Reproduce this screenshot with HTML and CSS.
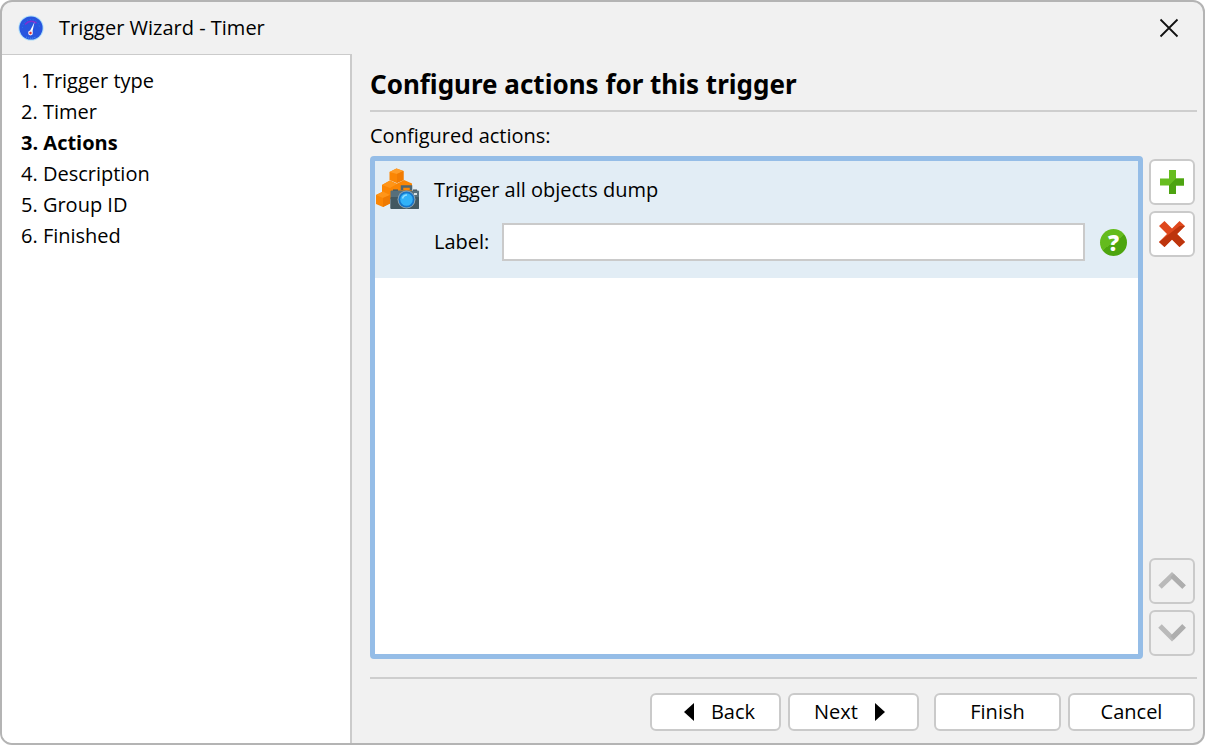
FILE: index.html
```
<!DOCTYPE html>
<html lang="en">
<head>
    <meta charset="UTF-8">
    <meta name="viewport" content="width=device-width, initial-scale=1.0">
    <title>Trigger Wizard - Timer</title>
    <link rel="stylesheet" href="styles.css">
</head>
<body>
    <div class="window">
        <header class="titlebar">
            <svg class="app-icon" viewBox="0 0 26 26" aria-hidden="true">
                <circle cx="13" cy="13" r="12.6" fill="#a9dcfa"/>
                <circle cx="13" cy="13" r="11.6" fill="#2855df"/>
                <path d="M4.500 13a8.500 8.500 0 0 1 17 0" fill="none" stroke="#2f78ef" stroke-width="1" stroke-dasharray="1 2"/>
                <path d="M7 9.500Q12 4 18.500 8" fill="none" stroke="#8030cf" stroke-width="1.500"/>
                <path d="M16.500 7l-5.300 10.500 2.800 1z" fill="#fff"/>
                <circle cx="12.500" cy="18" r="2.400" fill="#f2e7f0"/>
                <circle cx="12.500" cy="18" r="1.200" fill="#e5322d"/>
                <path d="M8 22q5 2.500 10 0" fill="none" stroke="#4aa5f5" stroke-width="1" stroke-dasharray="1 1"/>
            </svg>
            <span class="window-title">Trigger Wizard - Timer</span>
            <button class="close" type="button" aria-label="Close">
                <svg viewBox="0 0 20 20" width="20" height="20"><path d="M1.500 1.500l17 17M18.500 1.500l-17 17" stroke="#111" stroke-width="1.800"/></svg>
            </button>
        </header>

        <div class="body">
            <nav class="sidebar">
                <ol class="steps">
                    <li>1. Trigger type</li>
                    <li>2. Timer</li>
                    <li class="current" aria-current="step">3. Actions</li>
                    <li>4. Description</li>
                    <li>5. Group ID</li>
                    <li>6. Finished</li>
                </ol>
            </nav>

            <main class="content">
                <h1>Configure actions for this trigger</h1>
                <div class="caption" id="actions-caption">Configured actions:</div>

                <div class="editor">
                    <div class="actions" role="group" aria-labelledby="actions-caption">
                        <div class="action">
                            <svg class="action-icon" viewBox="0 0 46 44" aria-hidden="true">
                                <path d="M14.500 4l7-3.500 7 2.500v9l-7 3-7-3z" fill="#fb8604"/>
                                <path d="M14.500 4l7-3.500 7 2.500-6.500 3z" fill="#ff9d28"/>
                                <path d="M22 6l6.500-3v9L22 15z" fill="#f17c03"/>
                                <path d="M21 16l8-4 8 3.500V28H21z" fill="#fb8604"/>
                                <path d="M7 17l8-4.500 7 3.500v12l-8 4-7-4z" fill="#fb8604"/>
                                <path d="M7 17l8-4.500 7 3.500-7 4z" fill="#ff9518"/>
                                <path d="M1 27l7-3.500 7 3.500v8.500L8 39l-7-3z" fill="#fb8604"/>
                                <path d="M1 27l7-3.500 7 3.500-7 3z" fill="#ff9518"/>
                                <path d="M8 30l7-3v8.500L8 39z" fill="#ee7a02"/>
                                <path d="M27 22v-3.500h9V22" fill="none" stroke="#4d6672" stroke-width="2.500"/>
                                <rect x="18" y="21.500" width="5" height="3" fill="#3e505a"/>
                                <rect x="38" y="21.500" width="4" height="3" fill="#3e505a"/>
                                <rect x="15.500" y="22.500" width="28.500" height="18.500" rx="1" fill="#566f7b"/>
                                <rect x="15.500" y="29" width="28.500" height="12" rx="1" fill="#425861"/>
                                <rect x="39" y="25" width="3" height="2" fill="#d5e0e4"/>
                                <circle cx="31.500" cy="31.500" r="9" fill="#8ea5b0"/>
                                <circle cx="31.500" cy="31.500" r="8" fill="#1675c8"/>
                                <circle cx="31.500" cy="31.500" r="6.300" fill="#31b2f8"/>
                                <path d="M27.500 30.500q1-3.500 4.500-3.500" fill="none" stroke="#8eddff" stroke-width="1.500"/>
                            </svg>
                            <div class="action-name">Trigger all objects dump</div>
                            <div class="field">
                                <label for="label">Label:</label>
                                <input type="text" id="label">
                                <button class="help" type="button" aria-label="Help">?</button>
                            </div>
                        </div>
                    </div>

                    <div class="tools">
                        <button type="button" aria-label="Add action">
                            <svg viewBox="0 0 26 26"><path d="M10 1h7v8.500h8v7h-8V25h-7v-8.500H1v-7h9z" fill="#67bd20"/><path d="M17 9.500h8v7h-8V25h-7v-8.500z" fill="#4da311"/></svg>
                        </button>
                        <button type="button" aria-label="Remove action">
                            <svg viewBox="0 0 26 26"><path d="M5.500 0L13 7.500 20.500 0 26 5l-8 8 8 8-5.500 5-7.500-7.500L5.500 26 0 21l8-8-8-8z" fill="#df481d"/><path d="M26 5l-8 8 8 8-5.500 5-7.500-7.500L5.500 26 0 21 20.500 5z" fill="#bd350d"/></svg>
                        </button>
                        <button class="move-up" type="button" aria-label="Move up" disabled>
                            <svg viewBox="0 0 28 28"><path d="M2 20L14 8.500 26 20" fill="none" stroke="#bababa" stroke-width="5"/><path d="M14 8.500L26 20" fill="none" stroke="#aeaeae" stroke-width="5"/></svg>
                        </button>
                        <button type="button" aria-label="Move down" disabled>
                            <svg viewBox="0 0 28 28"><path d="M2 7L14 19 26 7" fill="none" stroke="#bababa" stroke-width="5"/><path d="M14 19L26 7" fill="none" stroke="#aeaeae" stroke-width="5"/></svg>
                        </button>
                    </div>
                </div>

                <footer class="buttons">
                    <button class="nav-button back" type="button"><svg viewBox="0 0 10 18"><path d="M10 0v18L0 9z"/></svg>Back</button>
                    <button class="nav-button next" type="button">Next<svg viewBox="0 0 10 18"><path d="M0 0v18l10-9z"/></svg></button>
                    <button class="finish" type="button">Finish</button>
                    <button type="button">Cancel</button>
                </footer>
            </main>
        </div>
    </div>
</body>
</html>
```
FILE: styles.css
```
* {
    box-sizing: border-box;
}
body {
    margin: 0;
    background: #fff;
    color: #000;
    font-family: "Open Sans", "Noto Sans", sans-serif;
    font-size: 20px;
    line-height: 28px;
}
button,
input {
    font: inherit;
    color: inherit;
}
button {
    display: flex;
    align-items: center;
    justify-content: center;
    padding: 0;
    border: 2px solid #cacaca;
    border-radius: 6px;
    background: #fff;
}
.window {
    display: flex;
    flex-direction: column;
    min-height: 100vh;
    border: 2px solid #b4b4b4;
    border-radius: 12px;
    background: #f1f1f1;
    overflow: hidden;
}

/* title bar */
.titlebar {
    display: flex;
    align-items: center;
    height: 52px;
    padding: 0 24px 0 16px;
}
.app-icon {
    width: 26px;
    height: 26px;
}
.window-title {
    flex: 1;
    margin-left: 15px;
}
.close {
    border: none;
    background: none;
}

.body {
    display: flex;
    flex: 1;
}

/* wizard steps */
.sidebar {
    width: 350px;
    flex-shrink: 0;
    padding: 12px 19px;
    border-top: 1px solid #cbcbcb;
    border-right: 2px solid #cbcbcb;
    background: #fff;
}
.steps {
    display: flex;
    flex-direction: column;
    gap: 3px;
    margin: 0;
    padding: 0;
    list-style: none;
}
.current {
    font-weight: bold;
}

/* right side */
.content {
    display: flex;
    flex-direction: column;
    flex: 1;
    min-width: 0;
    padding: 12px 6px 12px 18px;
}
h1 {
    margin: 0;
    padding-bottom: 8px;
    border-bottom: 2px solid #cecece;
    font-family: "Noto Sans", "Open Sans", sans-serif;
    font-size: 26px;
    line-height: 36px;
}
.caption {
    padding: 10px 0 6px;
}
.editor {
    display: flex;
    flex: 1;
    gap: 6px;
    padding: 0 2px 18px 0;
}
.actions {
    flex: 1;
    min-width: 0;
    border: 5px solid #95bde7;
    border-radius: 4px;
    background: #fff;
}
.action {
    display: grid;
    grid-template-columns: 46px 1fr;
    column-gap: 13px;
    row-gap: 11px;
    align-items: center;
    padding: 7px 11px 17px 0;
    background: #e2edf5;
}
.action-icon {
    width: 46px;
    height: 44px;
}
.field {
    display: flex;
    grid-column: 2;
    align-items: center;
}
.field input {
    flex: 1;
    min-width: 0;
    height: 38px;
    margin: 0 15px 0 13px;
    padding: 0 8px;
    border: 2px solid #cacaca;
    background: #fff;
}
.help {
    width: 27px;
    height: 27px;
    border: none;
    border-radius: 50%;
    background: linear-gradient(145deg, #64bb1d 50%, #4da50f 50%);
    color: #fff;
    font-size: 22px;
    font-weight: 800;
    line-height: 27px;
}
.tools {
    display: flex;
    flex-direction: column;
    gap: 6px;
    padding: 3px 0;
}
.tools button {
    width: 46px;
    height: 46px;
}
.tools svg {
    width: 26px;
    height: 26px;
}
.tools button:disabled {
    background: #f1f1f1;
}
.tools button:disabled svg {
    width: 28px;
    height: 28px;
}
.tools .move-up {
    margin-top: auto;
}

/* bottom buttons */
.buttons {
    display: flex;
    justify-content: flex-end;
    gap: 7px;
    padding: 14px 2px 0 0;
    border-top: 2px solid #cecece;
}
.buttons button {
    width: 127px;
    height: 38px;
}
.buttons .nav-button {
    width: 131px;
    gap: 17px;
}
.buttons .back {
    padding-left: 8px;
}
.buttons .next {
    padding-right: 8px;
}
.buttons .finish {
    margin-left: 8px;
}
.buttons svg {
    width: 10px;
    height: 18px;
}
```
